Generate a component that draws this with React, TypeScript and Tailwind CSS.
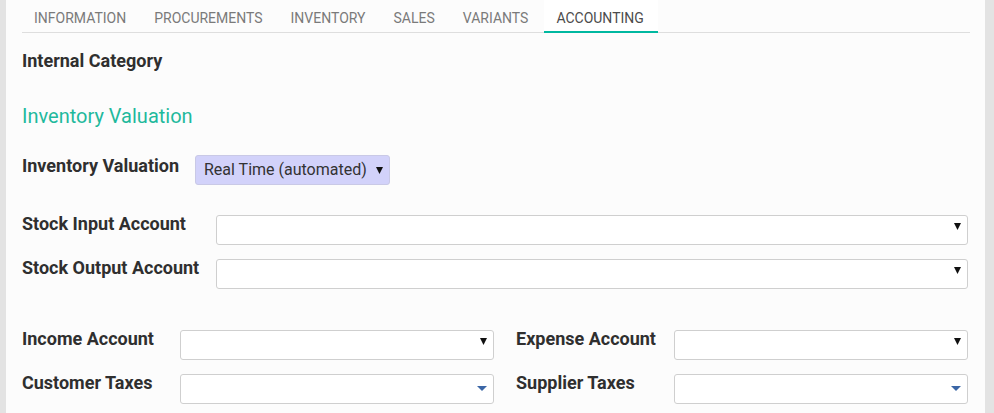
import React from "react";

const tabs = ["Information", "Procurements", "Inventory", "Sales", "Variants", "Accounting"];

function Caret({ blue }: { blue?: boolean }) {
  if (blue) {
    return (
      <svg width="10" height="6" viewBox="0 0 10 6" className="shrink-0">
        <path d="M0 0h10L5 5z" fill="#3b66a6" />
      </svg>
    );
  }
  return (
    <svg width="7" height="7" viewBox="0 0 7 7" className="shrink-0">
      <path d="M0 0h7L3.5 7z" fill="#111" />
    </svg>
  );
}

function Field({ width, blue }: { width: string; blue?: boolean }) {
  return (
    <div
      className={`${width} h-[30px] mt-[3px] bg-white border border-[#cfcfcf] rounded-[3px] flex justify-end pr-[6px] ${
        blue ? "items-center" : "items-start pt-[7px]"
      }`}
    >
      <Caret blue={blue} />
    </div>
  );
}

const label = "text-[18px] leading-[24px] font-bold text-[#2f2f2f] whitespace-nowrap";

export default function App() {
  return (
    <div
      className="w-full h-[413px] bg-[#e3e3e3] flex overflow-hidden"
      style={{ fontFamily: "Roboto, 'Liberation Sans', sans-serif" }}
    >
      <div className="ml-[6px] w-[979px] h-full bg-[#fcfcfc] pl-[16px] pr-[16px]">
        <ul className="flex gap-[4px] border-b border-[#dedede] w-[948px] h-[33px]">
          {tabs.map((t) => {
            const active = t === "Accounting";
            return (
              <li
                key={t}
                className={`px-[12px] h-[33px] pt-[8px] text-[14px] leading-[20px] uppercase ${
                  active
                    ? "bg-white text-[#4c4c4c] border-b-2 border-[#00b8a0] pr-[14px]"
                    : "text-[#7a7a7a]"
                }`}
              >
                {t}
              </li>
            );
          })}
        </ul>

        <div className={`mt-[16px] ${label}`}>Internal Category</div>

        <div className="mt-[29px] text-[20px] leading-[28px] text-[#1fb99c]">
          Inventory Valuation
        </div>

        <div className="mt-[24px] flex items-start">
          <div className={`w-[173px] ${label}`}>Inventory Valuation</div>
          <div className="w-[195px] h-[30px] mt-[1px] bg-[#d2d2fa] border border-[#c9c9e6] rounded-[3px] flex items-center justify-between pl-[8px] pr-[6px] text-[16px] text-[#333]">
            <span>Real Time (automated)</span>
            <Caret />
          </div>
        </div>

        <div className="mt-[27px] flex flex-col gap-[11px]">
          <div className="flex items-start">
            <div className={`w-[194px] ${label}`}>Stock Input Account</div>
            <Field width="w-[752px]" />
          </div>
          <div className="flex items-start">
            <div className={`w-[194px] ${label}`}>Stock Output Account</div>
            <Field width="w-[752px]" />
          </div>
        </div>

        <div className="mt-[38px] grid grid-cols-[494px_454px] gap-y-[11px]">
          <div className="flex items-start">
            <div className={`w-[158px] ${label}`}>Income Account</div>
            <Field width="w-[314px]" />
          </div>
          <div className="flex items-start">
            <div className={`w-[158px] ${label}`}>Expense Account</div>
            <Field width="w-[294px]" />
          </div>
          <div className="flex items-start">
            <div className={`w-[158px] ${label}`}>Customer Taxes</div>
            <Field width="w-[314px]" blue />
          </div>
          <div className="flex items-start">
            <div className={`w-[158px] ${label}`}>Supplier Taxes</div>
            <Field width="w-[294px]" blue />
          </div>
        </div>
      </div>
    </div>
  );
}
